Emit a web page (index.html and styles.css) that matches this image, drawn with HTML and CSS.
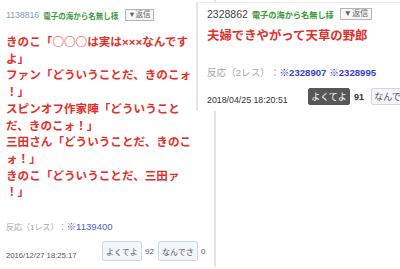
FILE: index.html
```html
<!DOCTYPE html>
<html lang="ja">
<head>
    <meta charset="UTF-8" />
    <meta name="viewport" content="width=device-width, initial-scale=1.0"/>
    <title>レス</title>
    <link rel="stylesheet" href="styles.css">
</head>
<body>
    <div class="res res-left">
        <div class="res-head">
            <span class="res-no">1138816</span>
            <span class="res-name">電子の海から名無し様</span>
            <span class="btn-reply">▼返信</span>
        </div>
        <p class="res-msg">きのこ「○○○は実は<span class="latin">×××</span>なんですよ」<br>ファン「どういうことだ、きのこォ！」<br>スピンオフ作家陣「どういうことだ、きのこォ！」<br>三田さん「どういうことだ、きのこォ！」<br>きのこ「どういうことだ、三田ァ！」</p>
        <div class="res-react">反応（1レス）：<a href="#">※1139400</a></div>
        <div class="res-foot">
            <span class="res-date">2016/12/27 18:25:17</span>
            <span class="vote">よくてよ</span>
            <span class="count">92</span>
            <span class="vote">なんでさ</span>
            <span class="count">0</span>
        </div>
    </div>

    <div class="res res-right">
        <div class="res-head">
            <span class="res-no">2328862</span>
            <span class="res-name">電子の海から名無し様</span>
            <span class="btn-reply">▼返信</span>
        </div>
        <p class="res-msg">夫婦できやがって天草の野郎</p>
        <div class="res-react">反応（2レス）：<a href="#">※2328907</a> <a href="#">※2328995</a></div>
        <div class="res-foot">
            <span class="res-date">2018/04/25 18:20:51</span>
            <span class="vote voted">よくてよ</span>
            <span class="count">91</span>
            <span class="vote">なんでさ</span>
        </div>
    </div>
</body>
</html>
```

FILE: styles.css
```css
* {
    margin: 0;
    padding: 0;
    box-sizing: border-box;
}

body {
    font-family: "Liberation Sans", "Noto Sans CJK JP", sans-serif;
    background: #fff;
    color: #444;
    position: relative;
    width: 400px;
    height: 269px;
    overflow: hidden;
    text-spacing-trim: space-all;
}

a {
    text-decoration: none;
}

.res-head {
    display: flex;
    align-items: center;
    white-space: nowrap;
}

.res-name {
    color: #3d9a3d;
    font-weight: bold;
}

.btn-reply {
    border: 1px solid #b5b5b5;
    background: #f6f6f6;
    color: #666;
    line-height: 1;
}

.res-msg {
    font-family: "Noto Sans CJK JP", sans-serif;
    color: #e2312b;
    font-weight: bold;
    line-break: loose;
}

.res-msg .latin {
    font-family: "Liberation Sans", sans-serif;
    line-height: 1;
}

.res-react {
    color: #a5a5a5;
    white-space: nowrap;
}

.res-foot {
    display: flex;
    align-items: flex-end;
    white-space: nowrap;
}

.vote {
    display: flex;
    flex-shrink: 0;
    align-items: center;
    justify-content: center;
    background: #f3f7fb;
    border: 1px solid #c9d9e8;
    border-radius: 2px;
    color: #555;
}

.count {
    align-self: center;
    color: #555;
}

/* left screenshot */
.res-left {
    width: 216px;
    height: 267px;
    padding-left: 6px;
    border-right: 2px solid #e4e4e4;
}

.res-left .res-head {
    height: 30px;
    gap: 4px;
}

.res-left .res-no {
    color: #7c9bd2;
    font-size: 8.7px;
}

.res-left .res-name {
    font-size: 7.5px;
}

.res-left .btn-reply {
    font-size: 7.5px;
    padding: 1px 2px;
    margin-left: 3px;
}

.res-left .res-msg {
    width: 192px;
    margin-top: 3px;
    font-size: 11.6px;
    line-height: 16.7px;
}

.res-left .res-react {
    margin-top: 21px;
    font-size: 8px;
    line-height: 12px;
}

.res-left .res-react a {
    color: #4f5fd2;
    font-size: 9.6px;
}

.res-left .res-foot {
    margin-top: 7px;
    height: 20px;
}

.res-left .res-date {
    font-size: 7.7px;
    line-height: 10px;
    color: #555;
    width: 96px;
}

.res-left .vote {
    width: 40px;
    height: 20px;
    font-size: 8px;
}

.res-left .count {
    font-size: 8px;
    padding: 0 4px 0 3px;
}

/* right screenshot, pasted over the left one */
.res-right {
    position: absolute;
    left: 196px;
    top: 2px;
    width: 204px;
    height: 109px;
    overflow: hidden;
    background: #fff;
    border-left: 2px solid #e6e6e6;
    border-top: 1px solid #ececec;
    padding-left: 9px;
}

.res-right .res-head {
    height: 22px;
    gap: 4px;
}

.res-right .res-no {
    color: #444;
    font-size: 10.5px;
}

.res-right .res-name {
    font-size: 8.2px;
}

.res-right .btn-reply {
    font-size: 8.2px;
    padding: 1px 3px;
    margin-left: 2px;
}

.res-right .res-msg {
    margin-top: 2px;
    font-size: 12.4px;
    line-height: 17px;
    white-space: nowrap;
}

.res-right .res-react {
    margin-top: 22px;
    font-size: 9.6px;
    line-height: 13px;
}

.res-right .res-react a {
    color: #3a3ad4;
    font-weight: bold;
    font-size: 9.6px;
}

.res-right .res-foot {
    margin-top: 9px;
    height: 17px;
}

.res-right .res-date {
    flex-shrink: 0;
    font-size: 8.8px;
    line-height: 10px;
    color: #333;
    width: 101px;
}

.res-right .vote {
    width: 42px;
    height: 17px;
    font-size: 9px;
}

.res-right .vote.voted {
    background: #575757;
    border-color: #575757;
    color: #fff;
}

.res-right .count {
    font-size: 9px;
    font-weight: bold;
    color: #333;
    padding: 0 7px 0 4px;
}
```
